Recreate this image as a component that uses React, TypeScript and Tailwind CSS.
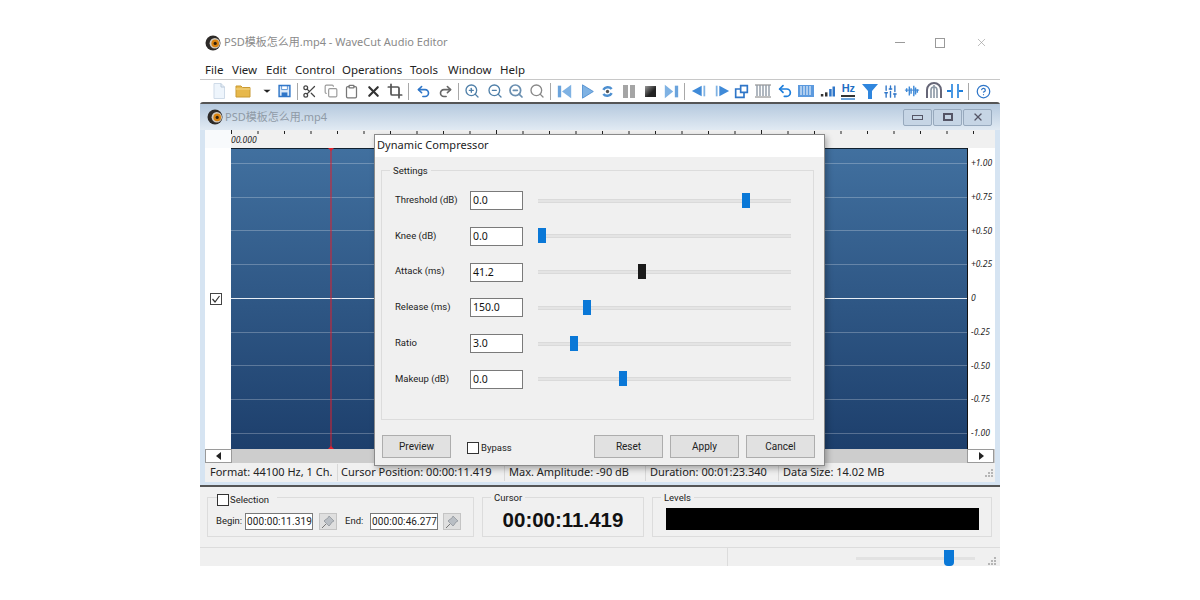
import type { ReactNode } from "react";
import {
  CircleHelp,
  Clipboard,
  Copy,
  Crop,
  Redo2,
  Scissors,
  Search,
  SlidersVertical,
  Undo2,
  X,
  ZoomIn,
  ZoomOut,
} from "lucide-react";

const BLUE = "#3f8ad8";
const FONT = "font-['Noto_Sans','Noto_Sans_CJK_SC',sans-serif]";
const SMALL = "font-['Roboto',sans-serif] text-[10px]";
const LABEL = "font-['Roboto',sans-serif] text-[9.5px]";

function Svg({ children, w = 18, h = 18 }: { children: ReactNode; w?: number; h?: number }) {
  return (
    <svg width={w} height={h} viewBox="0 0 18 18" fill="none">
      {children}
    </svg>
  );
}

function Logo() {
  return (
    <svg width="16" height="16" viewBox="0 0 16 16" className="shrink-0">
      <circle cx="8" cy="8" r="7.5" fill="#2d2a28" />
      <circle cx="9.8" cy="8.2" r="5.2" fill="#cfc8bd" />
      <circle cx="10.2" cy="8.4" r="3.8" fill="#d9820f" />
      <circle cx="10.2" cy="8.4" r="1.6" fill="#33210c" />
    </svg>
  );
}

function Sep() {
  return <div className="w-px h-[17px] bg-[#a8a8a8] shrink-0" />;
}

function Tool({ w = 21.3, children }: { w?: number; children: ReactNode }) {
  return (
    <div className="flex items-center justify-center shrink-0" style={{ width: w }}>
      {children}
    </div>
  );
}

function Toolbar() {
  const gray = "#7d7d7d";
  return (
    <div className="flex items-center h-[23px] pl-[8px] border-t border-[#c8c8c8]">
      <Tool w={22}>
        <Svg>
          <path d="M4 1.5h7l3.5 3.5v11.5H4z" fill="#eef5fc" stroke="#cfdbe8" />
          <path d="M11 1.5V5h3.5" stroke="#b9c8d8" />
        </Svg>
      </Tool>
      <Tool w={26}>
        <Svg>
          <path d="M2 4h5l1.5 1.5H16V15H2z" fill="#e7b84b" stroke="#c99a33" />
          <path d="M2 7h14" stroke="#f3d88f" />
        </Svg>
      </Tool>
      <Tool w={22}>
        <Svg w={8} h={8}>
          <path d="M1 6h16l-8 7z" fill="#222" />
        </Svg>
      </Tool>
      <Tool w={13}>
        <Svg w={14} h={14}>
          <path d="M1.5 1.5h15v15h-15z" fill="#dbe9f8" stroke="#2f76c8" strokeWidth="2" />
          <path d="M5 2h8v5H5z" fill="#fff" stroke="#2f76c8" />
          <path d="M5 11h8v5H5z" fill="#2f76c8" />
        </Svg>
      </Tool>
      <div className="w-[6px]" />
      <Sep />
      <Tool w={22}>
        <Scissors size={15} color="#444" />
      </Tool>
      <Tool>
        <Copy size={14} color="#9a9a9a" />
      </Tool>
      <Tool>
        <Clipboard size={15} color="#777" />
      </Tool>
      <Tool>
        <X size={17} color="#333" strokeWidth={3} />
      </Tool>
      <Tool>
        <Crop size={16} color="#555" strokeWidth={2.6} />
      </Tool>
      <div className="w-[3px]" />
      <Sep />
      <Tool w={29}>
        <Undo2 size={15} color="#2f76c8" strokeWidth={2.6} />
      </Tool>
      <Tool w={15}>
        <Redo2 size={15} color="#666" strokeWidth={2.6} />
      </Tool>
      <div className="w-[5px]" />
      <Sep />
      <Tool w={25}>
        <ZoomIn size={16} color="#4f7fa8" />
      </Tool>
      <Tool>
        <ZoomOut size={16} color="#4f7fa8" />
      </Tool>
      <Tool>
        <ZoomOut size={16} color="#6a8fb0" strokeWidth={2.6} />
      </Tool>
      <Tool>
        <Search size={16} color="#888" />
      </Tool>
      <div className="w-[2px]" />
      <Sep />
      <Tool w={26}>
        <Svg w={15} h={15}>
          <path d="M1 2h4v14H1z" fill="#6aa3dc" />
          <path d="M17 1v16L6 9z" fill="#7fb2e3" />
        </Svg>
      </Tool>
      <Tool w={20}>
        <Svg w={15} h={15}>
          <path d="M3 1v16l13-8z" fill="#7fb2e3" stroke="#4a8bcf" />
        </Svg>
      </Tool>
      <Tool>
        <Svg w={15} h={15}>
          <path d="M4 7a6 6 0 0 1 10-1M14 11a6 6 0 0 1-10 1" stroke="#4d8fd0" strokeWidth="3" />
          <circle cx="9" cy="9" r="2" fill="#555" />
        </Svg>
      </Tool>
      <Tool>
        <div className="flex gap-[2px]">
          <div className="w-[5px] h-[13px] bg-[#a5a5a5]" />
          <div className="w-[5px] h-[13px] bg-[#a5a5a5]" />
        </div>
      </Tool>
      <Tool>
        <div className="w-[11px] h-[11px] bg-[linear-gradient(135deg,#9a9a9a_0%,#222_60%)]" />
      </Tool>
      <Tool>
        <Svg w={15} h={15}>
          <path d="M1 1v16l10-8z" fill="#7fb2e3" />
          <path d="M13 2h4v14h-4z" fill="#6aa3dc" />
        </Svg>
      </Tool>
      <div className="w-[2px]" />
      <Sep />
      <Tool w={28}>
        <Svg w={16} h={16}>
          <path d="M1 9l11-6v12z" fill={BLUE} />
          <path d="M14 3h2v12h-2z" fill="#7fb2e3" />
        </Svg>
      </Tool>
      <Tool w={18}>
        <Svg w={16} h={16}>
          <path d="M17 9L6 3v12z" fill={BLUE} />
          <path d="M2 3h2v12H2z" fill="#7fb2e3" />
        </Svg>
      </Tool>
      <Tool>
        <Svg w={15} h={15}>
          <path d="M2 6h10v10H2z" fill="#fff" stroke="#2f76c8" strokeWidth="2" />
          <path d="M8 2h8v8H8z" fill="#fff" stroke="#2f76c8" strokeWidth="2" />
        </Svg>
      </Tool>
      <Tool>
        <Svg>
          <path d="M1 3h16M1 15h16" stroke={gray} />
          <path d="M3 3v11M6 3v11M9 3v11M12 3v11M15 3v11" stroke="#8f9aa6" strokeWidth="1.4" />
        </Svg>
      </Tool>
      <Tool>
        <Undo2 size={16} color="#1f7fdc" strokeWidth={2.6} />
      </Tool>
      <Tool>
        <Svg>
          <path d="M1 3h16v12H1z" fill="#5c9ade" />
          <path d="M4 4v9M7 4v9M10 4v9M13 4v9" stroke="#fff" />
        </Svg>
      </Tool>
      <Tool>
        <Svg w={15} h={15}>
          <path d="M1 12h3v3H1z" fill="#333" />
          <path d="M6 10h3v5H6z" fill="#333" />
          <path d="M11 6h3v9h-3zM15 3h3v12h-3z" fill="#2f76c8" />
        </Svg>
      </Tool>
      <Tool>
        <div className="flex flex-col items-center">
          <span className="font-['Liberation_Sans',sans-serif] font-bold text-[11px] leading-[10px] text-[#1f6fc4]">Hz</span>
          <div className="w-[14px] h-[2px] bg-[#333] mt-[2px]" />
          <div className="w-[14px] h-[2px] bg-[#6aa3dc] mt-[1px]" />
        </div>
      </Tool>
      <Tool>
        <Svg>
          <path d="M1 2h16l-6 7v8H7V9z" fill="#2f86de" />
        </Svg>
      </Tool>
      <Tool>
        <SlidersVertical size={15} color="#2f76c8" strokeWidth={2.2} />
      </Tool>
      <Tool>
        <Svg w={16} h={16}>
          <path d="M1 8h16" stroke="#2f76c8" />
          <path d="M3 6v4M6 4v10M8 6v6M11 3v12M13 5v8M15 7v4" stroke="#3f8ad8" strokeWidth="1.6" />
        </Svg>
      </Tool>
      <Tool>
        <Svg>
          <path d="M2 16V8a7 7 0 0 1 14 0v8" stroke="#667" strokeWidth="2" />
          <path d="M6 16V8a3 3 0 0 1 6 0v8M9 3v13" stroke="#8b97a5" strokeWidth="1.6" />
        </Svg>
      </Tool>
      <Tool>
        <Svg>
          <path d="M6 2v14M12 2v14" stroke="#1f7fdc" strokeWidth="1.6" />
          <path d="M1 9h4M17 9h-4" stroke="#1f7fdc" strokeWidth="2" />
        </Svg>
      </Tool>
      <div className="w-[2px]" />
      <Sep />
      <Tool w={29}>
        <CircleHelp size={15} color="#2f76c8" />
      </Tool>
    </div>
  );
}

function WinButton({ children }: { children: ReactNode }) {
  return (
    <div className="w-[29px] h-[17px] rounded-[2px] border border-[#97a9bd] bg-[#c6d5e5] flex items-center justify-center">
      {children}
    </div>
  );
}

function Ruler() {
  const ticks = Array.from({ length: 29 }, (_, i) => i);
  return (
    <svg width="790" height="18" className="block">
      <rect x="26" width="764" height="18" fill="#f0f0f0" />
      <rect width="26" height="18" fill="#f8fafc" />
      {ticks.map((i) => {
        const x = 26.5 + i * 26.5;
        return <line key={i} x1={x} x2={x} y1={i % 10 === 0 ? 0 : 1} y2={4} stroke="#222" />;
      })}
    </svg>
  );
}

function Wave() {
  const lines = [15, 49, 82, 116, 184, 217, 251, 285];
  return (
    <svg width="736" height="301" className="block" preserveAspectRatio="none">
      <defs>
        <linearGradient id="wave" x1="0" x2="0" y1="0" y2="1">
          <stop offset="0" stopColor="#41709f" />
          <stop offset="1" stopColor="#1d3f6c" />
        </linearGradient>
      </defs>
      <rect width="736" height="301" fill="url(#wave)" />
      <line x1="0" x2="736" y1="0.5" y2="0.5" stroke="#10202f" />
      {lines.map((y) => (
        <line key={y} x1="0" x2="736" y1={y + 0.5} y2={y + 0.5} stroke="#ffffff" strokeOpacity="0.25" />
      ))}
      <line x1="0" x2="736" y1="150.5" y2="150.5" stroke="#e8eef5" />
      <line x1="100" x2="100" y1="0" y2="301" stroke="#e0202c" />
      <path d="M97 0h6l-3 3z" fill="#e0202c" />
      <path d="M97 301h6l-3-3z" fill="#e0202c" />
    </svg>
  );
}

function Checkbox() {
  return <div className="w-[12px] h-[12px] border border-[#333] bg-white shrink-0" />;
}

function Arrow({ dir }: { dir: "l" | "r" }) {
  return (
    <svg width="6" height="8" viewBox="0 0 6 8">
      <path d={dir === "l" ? "M5 0v8L0 4z" : "M1 0v8l5-4z"} fill="#222" />
    </svg>
  );
}

const SLIDERS = [
  { label: "Threshold (dB)", value: "0.0", left: 204, dark: false },
  { label: "Knee (dB)", value: "0.0", left: 0, dark: false },
  { label: "Attack (ms)", value: "41.2", left: 100, dark: true },
  { label: "Release (ms)", value: "150.0", left: 45, dark: false },
  { label: "Ratio", value: "3.0", left: 32, dark: false },
  { label: "Makeup (dB)", value: "0.0", left: 81, dark: false },
];

function SliderRow({ label, value, left, dark }: (typeof SLIDERS)[number]) {
  return (
    <div className="flex items-center h-[19px] mb-[16.8px]">
      <div className={`w-[75px] ml-[13px] ${LABEL} leading-none text-[#222] -mt-[2px] whitespace-nowrap`}>{label}</div>
      <div className="w-[53px] h-[19px] border border-[#7a7a7a] bg-white text-[10.5px] leading-[17px] pl-[2px] text-[#111]">
        {value}
      </div>
      <div className="relative ml-[15px] w-[253px] h-[4px] bg-[#e4e4e4] border-y border-[#dadada]">
        <div
          className={`absolute top-[-7px] w-[8px] h-[15px] ${dark ? "bg-[#1a1a1a]" : "bg-[#0a78d7]"}`}
          style={{ left }}
        />
      </div>
    </div>
  );
}

function Btn({ children, w = 69 }: { children: ReactNode; w?: number }) {
  return (
    <div
      className={`h-[23px] bg-[#e1e1e1] border border-[#adadad] flex items-center justify-center ${SMALL} text-[#222]`}
      style={{ width: w }}
    >
      {children}
    </div>
  );
}

function Dialog() {
  return (
    <div className="absolute left-[174px] top-[30px] w-[451px] h-[332px] bg-[#f0f0f0] border border-[#8a8a8a] shadow-[2px_3px_6px_rgba(0,0,0,0.3)] flex flex-col">
      <div className="h-[22px] shrink-0 bg-white pl-[2px] text-[11px] leading-[20px] tracking-[0.05px] text-[#222]">
        Dynamic Compressor
      </div>
      <div className="relative ml-[6px] mr-[10px] mt-[13px] h-[250px] border border-[#dcdcdc] pt-[20px]">
        <div className={`absolute left-[8px] top-[-6px] bg-[#f0f0f0] px-[3px] ${LABEL} leading-[12px] text-[#222]`}>
          Settings
        </div>
        {SLIDERS.map((s) => (
          <SliderRow key={s.label} {...s} />
        ))}
      </div>
      <div className="flex items-center mt-[15px] ml-[7px]">
        <Btn>Preview</Btn>
        <div className="ml-[16px] mt-[2px] w-[12px] h-[12px] border border-[#333] bg-white" />
        <span className={`ml-[2px] mt-[3px] ${LABEL} text-[#222] w-[113px]`}>Bypass</span>
        <Btn>Reset</Btn>
        <div className="w-[7px]" />
        <Btn>Apply</Btn>
        <div className="w-[7px]" />
        <Btn>Cancel</Btn>
      </div>
    </div>
  );
}

function TimeInput({ value }: { value: string }) {
  return (
    <div className="w-[68px] h-[17px] border border-[#7a7a7a] bg-white text-[10px] leading-[15px] pl-[1px] text-[#222] whitespace-nowrap tracking-[0.1px]">
      {value}
    </div>
  );
}

function PinBtn() {
  return (
    <div className="w-[18px] h-[17px] bg-[#dfdfdf] border border-[#c4c4c4] flex items-center justify-center">
      <svg width="14" height="14" viewBox="0 0 14 14">
        <path d="M8 1l5 5-2 1-2 3-1 1-5-5 1-1 3-2z" fill="#b9bec4" stroke="#8a8f96" strokeWidth="0.7" />
        <path d="M1 13l4-4" stroke="#777" />
      </svg>
    </div>
  );
}

function Grip() {
  return (
    <svg width="10" height="10" viewBox="0 0 10 10">
      <path d="M7 1h2v2H7zM4 4h2v2H4zM7 4h2v2H7zM1 7h2v2H1zM4 7h2v2H4zM7 7h2v2H7z" fill="#b5b5b5" />
    </svg>
  );
}

export default function App() {
  return (
    <div className={`w-[1200px] h-[600px] bg-white overflow-hidden pl-[200px] ${FONT}`}>
      <div className="w-[800px] pt-[25px]">
        <div className="h-[35px] flex items-center pl-[5px]">
          <Logo />
          <span className="ml-[3px] text-[11px] text-[#8a8a8a]">PSD模板怎么用.mp4 - WaveCut Audio Editor</span>
          <div className="ml-auto flex items-center gap-[30px] pr-[12px]">
            <div className="w-[10px] h-px bg-[#9a9a9a]" />
            <div className="w-[10px] h-[10px] border border-[#9a9a9a]" />
            <X size={13} color="#9a9a9a" strokeWidth={1.2} />
          </div>
        </div>
        <div className="h-[19px] flex items-center pl-[5px] text-[11.5px] text-[#222]">
          <span className="w-[27px]">File</span>
          <span className="w-[34px]">View</span>
          <span className="w-[29px]">Edit</span>
          <span className="w-[47px]">Control</span>
          <span className="w-[68px]">Operations</span>
          <span className="w-[38px]">Tools</span>
          <span className="w-[52px]">Window</span>
          <span>Help</span>
        </div>
        <Toolbar />

        <div className="relative h-[385px] border-t-2 border-b-2 border-[#555] rounded-t-[3px] bg-[#d6e4f2] flex flex-col px-[5px]">
          <div className="h-[26px] shrink-0 -mx-[5px] px-[7px] flex items-center bg-[linear-gradient(180deg,#b5c9de,#e1eaf3)]">
            <Logo />
            <span className="ml-[2px] text-[11px] text-[#8f9aa6]">PSD模板怎么用.mp4</span>
            <div className="ml-auto flex gap-[1px] pr-[1px]">
              <WinButton>
                <div className="w-[11px] h-[5px] border border-[#556]" />
              </WinButton>
              <WinButton>
                <div className="w-[10px] h-[8px] border-2 border-[#556]" />
              </WinButton>
              <WinButton>
                <X size={12} color="#556" strokeWidth={2.6} />
              </WinButton>
            </div>
          </div>
          <div className="relative h-[18px] shrink-0">
            <Ruler />
            <span className="absolute left-[26px] top-[5px] text-[8.5px] italic leading-[10px] text-[#222]">00.000</span>
          </div>
          <div className="flex h-[301px] shrink-0 w-[790px]">
            <div className="w-[26px] bg-white flex items-center pl-[5px] shrink-0">
              <div className="w-[12px] h-[12px] border border-[#444] flex items-center justify-center">
                <svg width="10" height="10" viewBox="0 0 10 10" fill="none">
                  <path d="M1.5 5l2.5 3 4.5-6" stroke="#333" strokeWidth="1.2" />
                </svg>
              </div>
            </div>
            <Wave />
            <div className="w-[28px] bg-white border-l border-[#111] pt-[8px] pl-[3px] shrink-0">
              {["+1.00", "+0.75", "+0.50", "+0.25", "0", "-0.25", "-0.50", "-0.75", "-1.00"].map((t) => (
                <div key={t} className="h-[14px] mb-[19.75px] text-[8.5px] italic leading-[14px] text-[#222]">
                  {t}
                </div>
              ))}
            </div>
          </div>
          <div className="h-[14px] shrink-0 w-[790px] bg-[#cdcdcd] flex justify-between pr-[1px]">
            <div className="w-[27px] bg-white border border-[#9a9a9a] flex items-center justify-center">
              <Arrow dir="l" />
            </div>
            <div className="w-[27px] bg-white border border-[#9a9a9a] flex items-center justify-center">
              <Arrow dir="r" />
            </div>
          </div>
          <div className="h-[19px] shrink-0 w-[790px] bg-[#f0f0f0] flex items-center text-[11px] text-[#222] whitespace-nowrap">
            <span className="w-[133px] pl-[5px] border-r border-[#d8d8d8]">Format: 44100 Hz, 1 Ch.</span>
            <span className="w-[167px] pl-[3px] border-r border-[#d8d8d8]">Cursor Position: 00:00:11.419</span>
            <span className="w-[141px] pl-[4px] border-r border-[#d8d8d8]">Max. Amplitude: -90 dB</span>
            <span className="w-[133px] pl-[4px] border-r border-[#d8d8d8]">Duration: 00:01:23.340</span>
            <span className="pl-[4px]">Data Size: 14.02 MB</span>
            <div className="ml-auto pr-[1px]">
              <Grip />
            </div>
          </div>
          <Dialog />
        </div>

        <div className="h-[60px] bg-[#f0f0f0] flex px-[7px] pt-[10px] gap-[8px]">
          <div className="relative w-[267px] h-[40px] border border-[#dcdcdc]">
            <div className="absolute left-[9px] top-[-5px] flex items-center bg-[#f0f0f0] pr-[8px]">
              <Checkbox />
              <span className={`ml-[1px] ${LABEL} leading-[14px] text-[#222]`}>Selection</span>
            </div>
            <div className={`flex items-center pl-[8px] pt-[15px] ${LABEL} text-[#222]`}>
              <span className="w-[29px]">Begin:</span>
              <TimeInput value="000:00:11.319" />
              <div className="w-[6px]" />
              <PinBtn />
              <div className="w-[8px]" />
              <span className="w-[25px]">End:</span>
              <TimeInput value="000:00:46.277" />
              <div className="w-[5px]" />
              <PinBtn />
            </div>
          </div>
          <div className="relative w-[162px] h-[40px] border border-[#dcdcdc] flex items-center justify-center">
            <div className={`absolute left-[8px] top-[-7px] bg-[#f0f0f0] px-[3px] ${LABEL} leading-[13px] text-[#222]`}>Cursor</div>
            <span className="font-['Liberation_Sans',sans-serif] font-bold text-[20.5px] leading-none text-[#111] mt-[6px]">00:00:11.419</span>
          </div>
          <div className="relative w-[340px] h-[40px] border border-[#dcdcdc] pl-[13px] pt-[10px]">
            <div className={`absolute left-[8px] top-[-7px] bg-[#f0f0f0] px-[3px] ${LABEL} leading-[13px] text-[#222]`}>Levels</div>
            <div className="w-[313px] h-[22px] bg-black" />
          </div>
        </div>

        <div className="h-[19px] bg-[#f0f0f0] border-t border-[#dcdcdc] flex items-center overflow-hidden">
          <div className="w-[528px] h-full border-r border-[#dcdcdc]" />
          <div className="relative ml-[128px] mt-[3px] w-[119px] h-[3px] bg-[#e2e2e2]">
            <div className="absolute left-[88px] top-[-7px] w-[10px] h-[16px] rounded-b-[4px] bg-[#0a78d7]" />
          </div>
          <div className="ml-auto pr-[3px] pt-[8px]">
            <Grip />
          </div>
        </div>
      </div>
    </div>
  );
}
